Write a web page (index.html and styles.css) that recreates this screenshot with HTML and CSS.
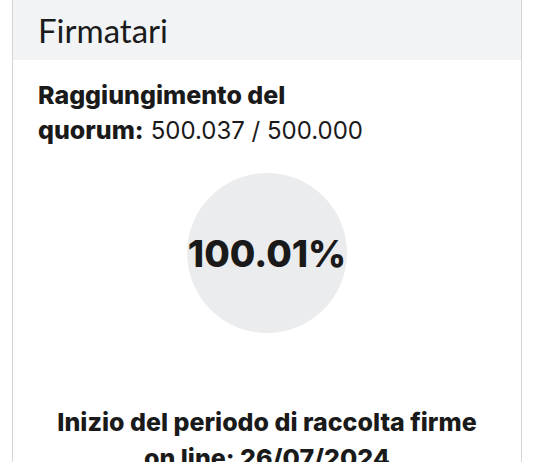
FILE: index.html
```html
<!DOCTYPE html>
<html lang="it">
<head>
    <meta charset="UTF-8">
    <meta name="viewport" content="width=device-width, initial-scale=1.0">
    <title>Firmatari</title>
    <link rel="stylesheet" href="styles.css">
</head>
<body>
    <div class="card">
        <div class="card-header">Firmatari</div>
        <div class="card-body">
            <p class="quorum"><strong>Raggiungimento del</strong><br><strong>quorum:</strong> <span class="count">500.037 / 500.000</span></p>
            <div class="circle-wrap">
                <div class="circle">100.01%</div>
            </div>
            <p class="start-date">Inizio del periodo di raccolta firme on line: 26/07/2024</p>
        </div>
    </div>
</body>
</html>
```

FILE: styles.css
```css
body {
    margin: 0;
    padding: 0 12px;
    background: #fff;
    color: #1a1a1a;
    font-family: Inter, 'Noto Sans', sans-serif;
    overflow: hidden;
}
.card {
    border-left: 1px solid #d4d5d8;
    border-right: 1px solid #d4d5d8;
    height: 462px;
    overflow: hidden;
}
.card-header {
    height: 60px;
    background-color: #f2f3f5;
    padding-left: 25px;
    font-family: Lato, sans-serif;
    font-size: 33px;
    line-height: 60px;
    color: #1b1b1b;
    box-sizing: border-box;
}
.card-body {
    padding: 18px 25px 0;
}
.quorum {
    margin: 0;
    font-size: 25px;
    line-height: 35px;
}
.quorum strong {
    font-weight: 800;
}
.quorum .count {
    font-size: 24px;
}
.circle-wrap {
    display: flex;
    justify-content: center;
    margin-top: 25px;
}
.circle {
    width: 160px;
    height: 160px;
    border-radius: 50%;
    background-color: #ebecee;
    display: flex;
    align-items: center;
    justify-content: center;
    font-size: 37px;
    font-weight: 800;
}
.start-date {
    max-width: 440px;
    margin: 71px auto 0;
    text-align: center;
    font-size: 25px;
    font-weight: 800;
    line-height: 36px;
}
```
